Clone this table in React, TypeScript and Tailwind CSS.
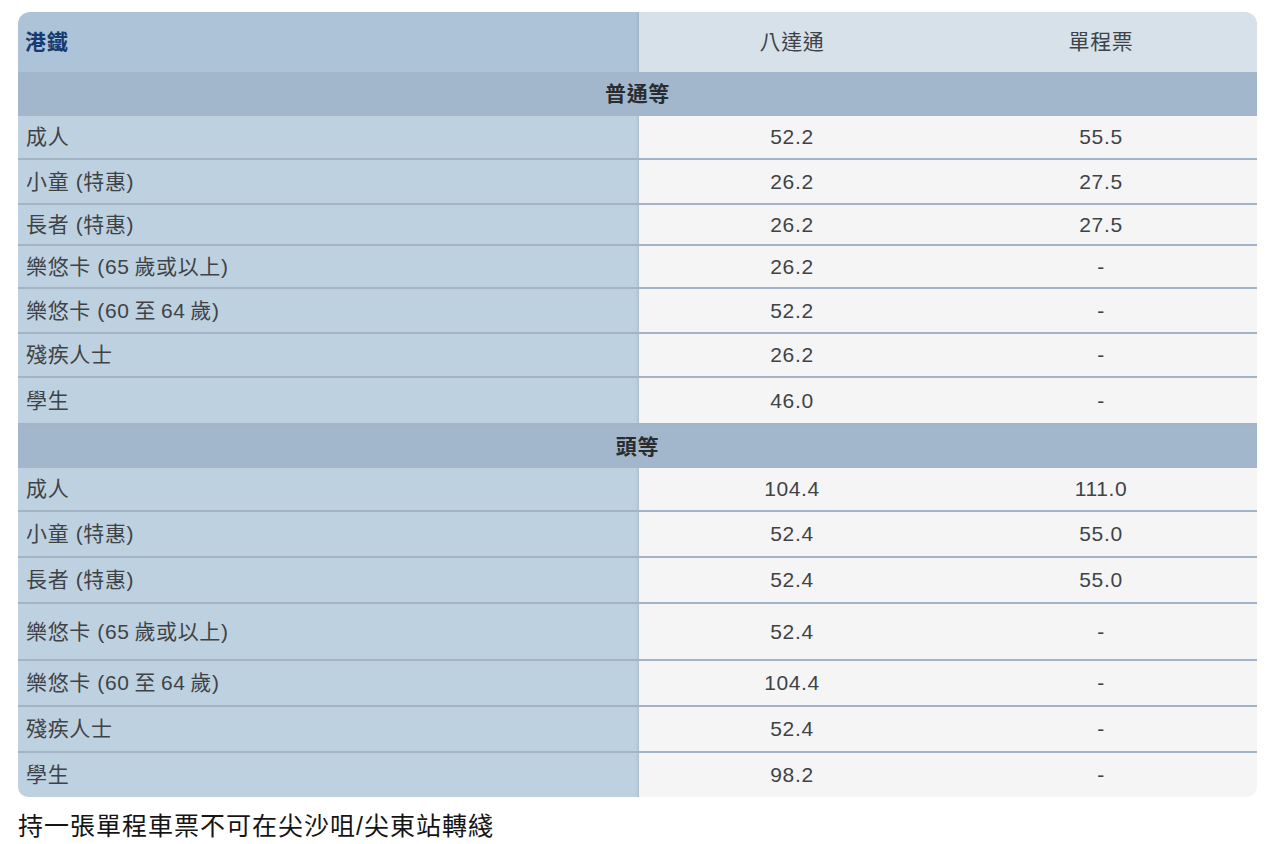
import React from "react";

type Row = { label: string; oct: string; single: string; h: string };

const sec1: Row[] = [
  { label: "成人", oct: "52.2", single: "55.5", h: "h-[44px]" },
  { label: "小童 (特惠)", oct: "26.2", single: "27.5", h: "h-[45px]" },
  { label: "長者 (特惠)", oct: "26.2", single: "27.5", h: "h-[41px]" },
  { label: "樂悠卡 (65\u2009歲或以上)", oct: "26.2", single: "-", h: "h-[43px]" },
  { label: "樂悠卡 (60\u2009至\u200964\u2009歲)", oct: "52.2", single: "-", h: "h-[45px]" },
  { label: "殘疾人士", oct: "26.2", single: "-", h: "h-[44px]" },
  { label: "學生", oct: "46.0", single: "-", h: "h-[47px]" },
];

const sec2: Row[] = [
  { label: "成人", oct: "104.4", single: "111.0", h: "h-[44px]" },
  { label: "小童 (特惠)", oct: "52.4", single: "55.0", h: "h-[46px]" },
  { label: "長者 (特惠)", oct: "52.4", single: "55.0", h: "h-[46px]" },
  { label: "樂悠卡 (65\u2009歲或以上)", oct: "52.4", single: "-", h: "h-[57px]" },
  { label: "樂悠卡 (60\u2009至\u200964\u2009歲)", oct: "104.4", single: "-", h: "h-[46px]" },
  { label: "殘疾人士", oct: "52.4", single: "-", h: "h-[46px]" },
  { label: "學生", oct: "98.2", single: "-", h: "h-[44px]" },
];

function DataRow({ r, last }: { r: Row; last: boolean }) {
  return (
    <div className={`grid grid-cols-[621px_306px_1fr] ${r.h} ${last ? "" : "border-b-2 border-[#a3b4c7]"}`}>
      <div className={`flex items-center bg-[#bed1e0] pl-[8px] text-[#3f4347] shadow-[inset_-3px_0_3px_-2px_rgba(80,100,120,0.2)] ${last ? "rounded-bl-[10px]" : ""}`}>
        {r.label}
      </div>
      <div className="flex items-center justify-center bg-[#f5f5f6] text-[#3f4347]">{r.oct}</div>
      <div className={`flex items-center justify-center bg-[#f5f5f6] text-[#3f4347] ${last ? "rounded-br-[10px]" : ""}`}>
        {r.single}
      </div>
    </div>
  );
}

function Section({ title, h }: { title: string; h: string }) {
  return (
    <div className={`flex ${h} items-center justify-center bg-[#a2b7cc] font-bold text-[#2a2d30]`}>
      {title}
    </div>
  );
}

export default function App() {
  return (
    <div
      className="min-h-[844px] w-[1267px] bg-white pt-[12px] text-[21px] tracking-[0.03em]"
      style={{ fontFamily: '"Liberation Sans", "Noto Sans CJK TC", sans-serif' }}
    >
      <div className="ml-[18px] w-[1239px]">
        <div className="grid h-[60px] grid-cols-[621px_306px_1fr] overflow-hidden rounded-t-[12px]">
          <div className="flex items-center bg-[#adc4d8] pl-[7px] font-bold text-[#173a70] shadow-[inset_-3px_0_3px_-2px_rgba(80,100,120,0.2)]">
            港鐵
          </div>
          <div className="flex items-center justify-center bg-[#d6e1e9] text-[#3f4347]">八達通</div>
          <div className="flex items-center justify-center bg-[#d6e1e9] text-[#3f4347]">單程票</div>
        </div>
        <Section title="普通等" h="h-[44px]" />
        {sec1.map((r, i) => (
          <DataRow key={"a" + i} r={r} last={false} />
        ))}
        <Section title="頭等" h="h-[43px]" />
        {sec2.map((r, i) => (
          <DataRow key={"b" + i} r={r} last={i === sec2.length - 1} />
        ))}
      </div>
      <div className="ml-[18px] mt-[11px] text-[25px] leading-[36px] tracking-[1px] text-[#151515]">
        持一張單程車票不可在尖沙咀/尖東站轉綫
      </div>
    </div>
  );
}
